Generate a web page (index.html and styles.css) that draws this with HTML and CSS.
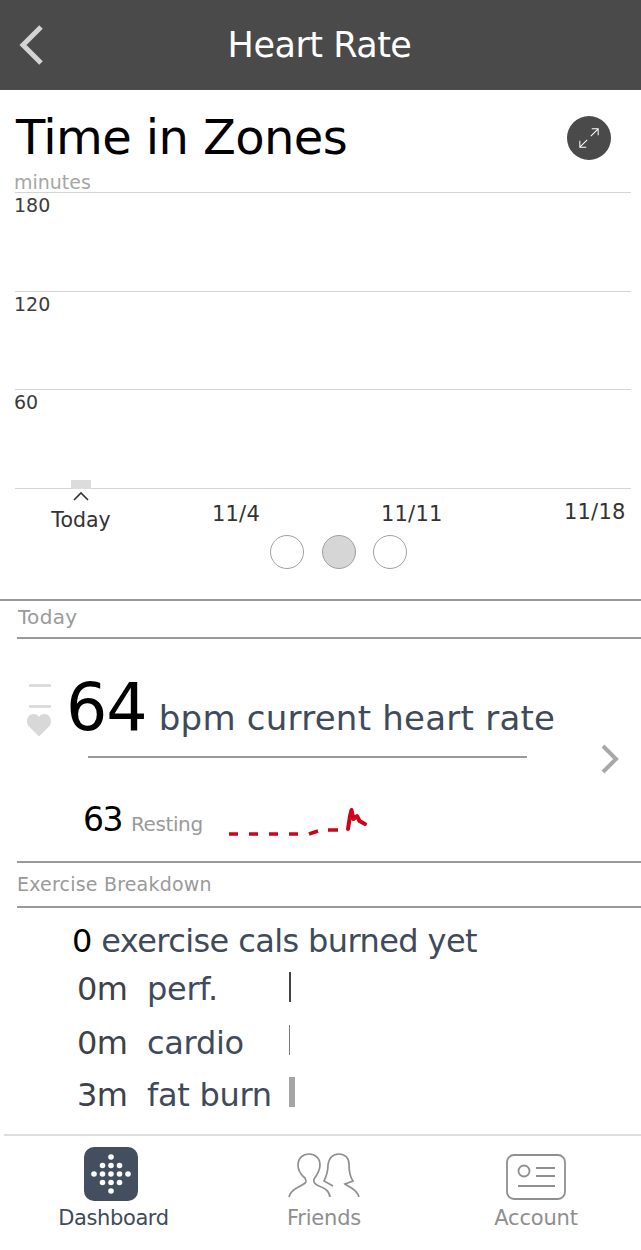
FILE: index.html
```html
<!DOCTYPE html>
<html lang="en">
<head>
<meta charset="utf-8">
<title>Heart Rate</title>
<link rel="stylesheet" href="styles.css">
</head>
<body>
<div class="app">
  <header class="topbar">
    <svg class="back" width="26" height="40" viewBox="0 0 26 40"><path d="M23 2 L5 20 L23 38" fill="none" stroke="#d4d4d4" stroke-width="5"/></svg>
    <h1>Heart Rate</h1>
  </header>
  <div class="title-row">
    <h2>Time in Zones</h2>
    <div class="expand">
      <svg width="22" height="22" viewBox="0 0 24 24"><path d="M14 10 L22 2 M15 2 H22 V9 M10 14 L2 22 M2 15 V22 H9" fill="none" stroke="#fff" stroke-width="1.100"/></svg>
    </div>
  </div>
  <div class="chart">
    <div class="unit">minutes</div>
    <div class="band"><span>180</span></div>
    <div class="band"><span>120</span></div>
    <div class="band"><span class="shift">60</span><i class="today-bar"></i></div>
    <div class="axis">
      <div class="tick today"><svg width="20" height="12" viewBox="0 0 20 12"><path d="M3 11 L10 4 L17 11" fill="none" stroke="#333" stroke-width="1.600"/></svg><span>Today</span></div>
      <span class="tick d1">11/4</span>
      <span class="tick d2">11/11</span>
      <span class="tick d3">11/18</span>
    </div>
  </div>
  <div class="dots"><i></i><i class="on"></i><i></i></div>
  <div class="sec-full">
    <div class="sec-label">Today</div>
  </div>
  <section class="current">
    <div class="heart">
      <i></i><i></i>
      <svg width="26" height="24" viewBox="0 0 26 24"><path d="M13 23.500 L2.500 13 C-1 8 2 1 7.500 1 C10 1 12 2 13 4 C14 2 16 1 18.500 1 C24 1 27 8 23.500 13 Z" fill="#d8d8d8"/></svg>
    </div>
    <div class="bpm">
      <div class="bpm-line"><b>64</b><span>bpm current heart rate</span></div>
      <svg class="chev" width="20" height="30" viewBox="0 0 20 30"><path d="M3 2 L16 15 L3 28" fill="none" stroke="#a8a8a8" stroke-width="4"/></svg>
    </div>
  </section>
  <div class="resting">
    <b>63</b><span>Resting</span>
    <svg width="150" height="40" viewBox="0 0 150 40"><path d="M9 30 H18 M29 30 H38 M49 30 H58 M69 30 H78 M89 30 L98 27 M108 26 H118" fill="none" stroke="#d0021b" stroke-width="3.500"/><path d="M128 25 L130 12 L131.500 6 L133.500 15 L137 12 L139.500 17 L145 20" fill="none" stroke="#d0021b" stroke-width="4" stroke-linecap="round" stroke-linejoin="round"/></svg>
  </div>
  <div class="sec-label2">Exercise Breakdown</div>
  <section class="exercise">
    <div class="cals"><b>0</b> exercise cals burned yet</div>
    <div class="zone first"><span class="mins">0m</span><span class="zname">perf.</span><i class="zbar dark"></i></div>
    <div class="zone"><span class="mins">0m</span><span class="zname">cardio</span><i class="zbar mid"></i></div>
    <div class="zone"><span class="mins">3m</span><span class="zname">fat burn</span><i class="zbar wide"></i></div>
  </section>
  <nav class="tabs">
    <div class="tab active">
      <div class="tile">
        <svg width="44" height="44" viewBox="0 0 44 44" fill="#fff">
          <circle cx="22" cy="5" r="2.800"/>
          <circle cx="22" cy="13.500" r="2.800"/><circle cx="13.500" cy="13.500" r="2.800"/><circle cx="30.500" cy="13.500" r="2.800"/>
          <circle cx="5" cy="22" r="2.800"/><circle cx="13.500" cy="22" r="2.800"/><circle cx="22" cy="22" r="2.800"/><circle cx="30.500" cy="22" r="2.800"/><circle cx="39" cy="22" r="2.800"/>
          <circle cx="13.500" cy="30.500" r="2.800"/><circle cx="22" cy="30.500" r="2.800"/><circle cx="30.500" cy="30.500" r="2.800"/>
          <circle cx="22" cy="39" r="2.800"/>
        </svg>
      </div>
      <span>Dashboard</span>
    </div>
    <div class="tab">
      <svg class="tab-ico" width="72" height="48" viewBox="0 0 72 48" fill="none" stroke="#8f8f8f" stroke-width="1.700"><path d="M1 45 C3 38 9 36 14 33 C18 31 19 30 17 26 C12 22 10 18 10 13 C10 6 15 2 21 2 C27 2 32 6 32 13 C32 18 29 23 26 27 C25 30 26 32 31 34 C36 36 41 38 42 45"/><path d="M45 34 L36 29 C38 25 40 20 40 13 C41 6 45 2 51 2 C57 2 61 6 61 12 C61 19 62 25 65 29 L57 32 C61 35 69 37 71 45"/></svg>
      <span>Friends</span>
    </div>
    <div class="tab">
      <svg class="tab-ico" width="60" height="46" viewBox="0 0 60 46" fill="none" stroke="#8f8f8f" stroke-width="1.800"><rect x="1" y="1" width="58" height="44" rx="7"/><circle cx="18" cy="17" r="5.500"/><path d="M30 14 H49 M30 22 H49 M12 32 H49"/></svg>
      <span>Account</span>
    </div>
  </nav>
</div>
</body>
</html>
```
FILE: styles.css
```css
* { box-sizing: border-box; }
html, body { margin: 0; padding: 0; background: #fff; }
.app { width: 641px; height: 1250px; overflow: hidden; font-family: "DejaVu Sans", "Open Sans", sans-serif; color: #3f4a5a; }
.topbar { position: relative; height: 90px; background: #4a4a4a; display: flex; align-items: center; justify-content: center; }
.topbar h1 { margin: 0 2px 0 0; font-size: 35px; font-weight: 400; color: #fff; letter-spacing: -0.5px; }
.back { position: absolute; left: 18px; top: 25px; }
.title-row { height: 82px; padding: 19px 30px 0 16px; display: flex; justify-content: space-between; align-items: flex-start; }
.title-row h2 { margin: 0; font-size: 48px; line-height: 56px; font-weight: 400; color: #000; letter-spacing: -0.6px; }
.expand { width: 44px; height: 44px; margin-top: 7px; border-radius: 50%; background: #4a4a4a; display: flex; align-items: center; justify-content: center; }
.chart { padding: 0 10px 0 15px; }
.unit { height: 20px; margin-left: -1px; font-size: 19px; line-height: 20px; color: #a6a6a6; letter-spacing: 0; }
.band { position: relative; height: 98.500px; border-top: 1px solid #d4d4d4; font-size: 19px; line-height: 24px; color: #3c3c3c; letter-spacing: 0; }
.band span { display: block; margin-left: -1px; }
.today-bar { position: absolute; left: 56px; bottom: -1px; width: 20px; height: 9px; background: #dcdcdc; }
.axis { display: grid; grid-template-columns: 131px 170px 183px 1fr; border-top: 1px solid #d4d4d4; height: 58px; font-size: 21px; color: #333; }
.tick { letter-spacing: 0.2px; }
.today { display: flex; flex-direction: column; align-items: center; width: 132px; font-size: 20.500px; letter-spacing: 0; }
.today svg { display: block; }
.today span { line-height: 26px; margin-top: 6px; }
.d1 { padding: 12px 0 0 66px; line-height: 26px; }
.d2 { padding: 12px 0 0 65px; line-height: 26px; }
.d3 { padding: 10px 0 0 65px; line-height: 26px; white-space: nowrap; }
.dots { display: flex; justify-content: center; gap: 17.500px; margin-top: -11px; height: 64px; padding-left: 36px; }
.dots i { width: 34px; height: 34px; border-radius: 50%; border: 1px solid #a0a0a0; background: #fff; }
.dots .on { background: #d6d6d6; }
.sec-full { border-top: 2px solid #999; }
.sec-label { height: 38px; margin-left: 17px; padding-left: 1px; border-bottom: 2px solid #999; font-size: 20px; line-height: 32px; color: #9a9a9a; letter-spacing: 0.300px; }
.current { display: flex; height: 120px; }
.heart { width: 66px; padding: 45px 0 0 26px; display: flex; flex-direction: column; }
.heart i { display: block; width: 22px; height: 3px; margin: 0 0 18px 3px; background: #dcdcdc; }
.heart i + i { margin-bottom: 5px; }
.bpm { position: relative; flex: 1; }
.bpm-line { display: flex; align-items: baseline; height: 80px; padding-top: 31px; }
.bpm-line b { font-size: 65px; line-height: 76px; font-weight: 400; color: #000; letter-spacing: -1px; }
.bpm-line span { margin-left: 12px; font-size: 34px; white-space: nowrap; letter-spacing: 0.250px; }
.bpm::after { content: ""; position: absolute; left: 22px; width: 439px; top: 117px; border-top: 2px solid #999; }
.chev { position: absolute; right: 21px; top: 105px; }
.resting { height: 102px; display: flex; align-items: flex-start; padding: 40px 0 0 83px; }
.resting b { font-size: 33px; line-height: 42px; font-weight: 400; color: #000; letter-spacing: -1.500px; }
.resting span { margin: 11px 0 0 9px; font-size: 20px; line-height: 28px; color: #9a9a9a; letter-spacing: -0.4px; }
.resting svg { margin: 5px 0 0 17px; }
.sec-label2 { height: 47px; margin-left: 17px; border-top: 2px solid #999; border-bottom: 2px solid #999; font-size: 19px; line-height: 42px; color: #9a9a9a; letter-spacing: 0.200px; }
.exercise { padding: 11px 0 0 77px; height: 227px; font-size: 32px; letter-spacing: -0.5px; }
.cals { margin-left: -5px; height: 43px; line-height: 44px; white-space: nowrap; letter-spacing: -0.600px; }
.cals b { font-weight: 400; color: #000; }
.zone { height: 52px; display: flex; align-items: center; line-height: 44px; }
.zone.first { height: 55px; }
.mins { width: 70px; color: #3d4148; }
.zname { width: 142px; white-space: nowrap; letter-spacing: -0.300px; }
.zbar { height: 30px; margin-bottom: 5px; }
.zbar.dark { width: 2px; background: #444; }
.zbar.mid { width: 1px; background: #777; }
.zbar.wide { width: 6px; background: #a5a5a5; }
.tabs { display: flex; height: 115px; margin-left: 4px; border-top: 2px solid #ddd; margin-top: -1px; }
.tab { display: flex; flex-direction: column; align-items: center; justify-content: flex-end; height: 97px; font-size: 21px; color: #8f8f8f; letter-spacing: -0.2px; }
.tab span { line-height: 30px; }
.tab:nth-child(1) { width: 214px; }
.tab:nth-child(2) { width: 215px; }
.tab:nth-child(3) { width: 211px; }
.tab.active { color: #3f4a5a; }
.tab.active span { margin-left: 6px; letter-spacing: -0.400px; }
.tile { width: 54px; height: 54px; border-radius: 10px; background: #434e5e; display: flex; align-items: center; justify-content: center; margin-bottom: 2px; }
.tab-ico { margin-bottom: 3px; }
```
